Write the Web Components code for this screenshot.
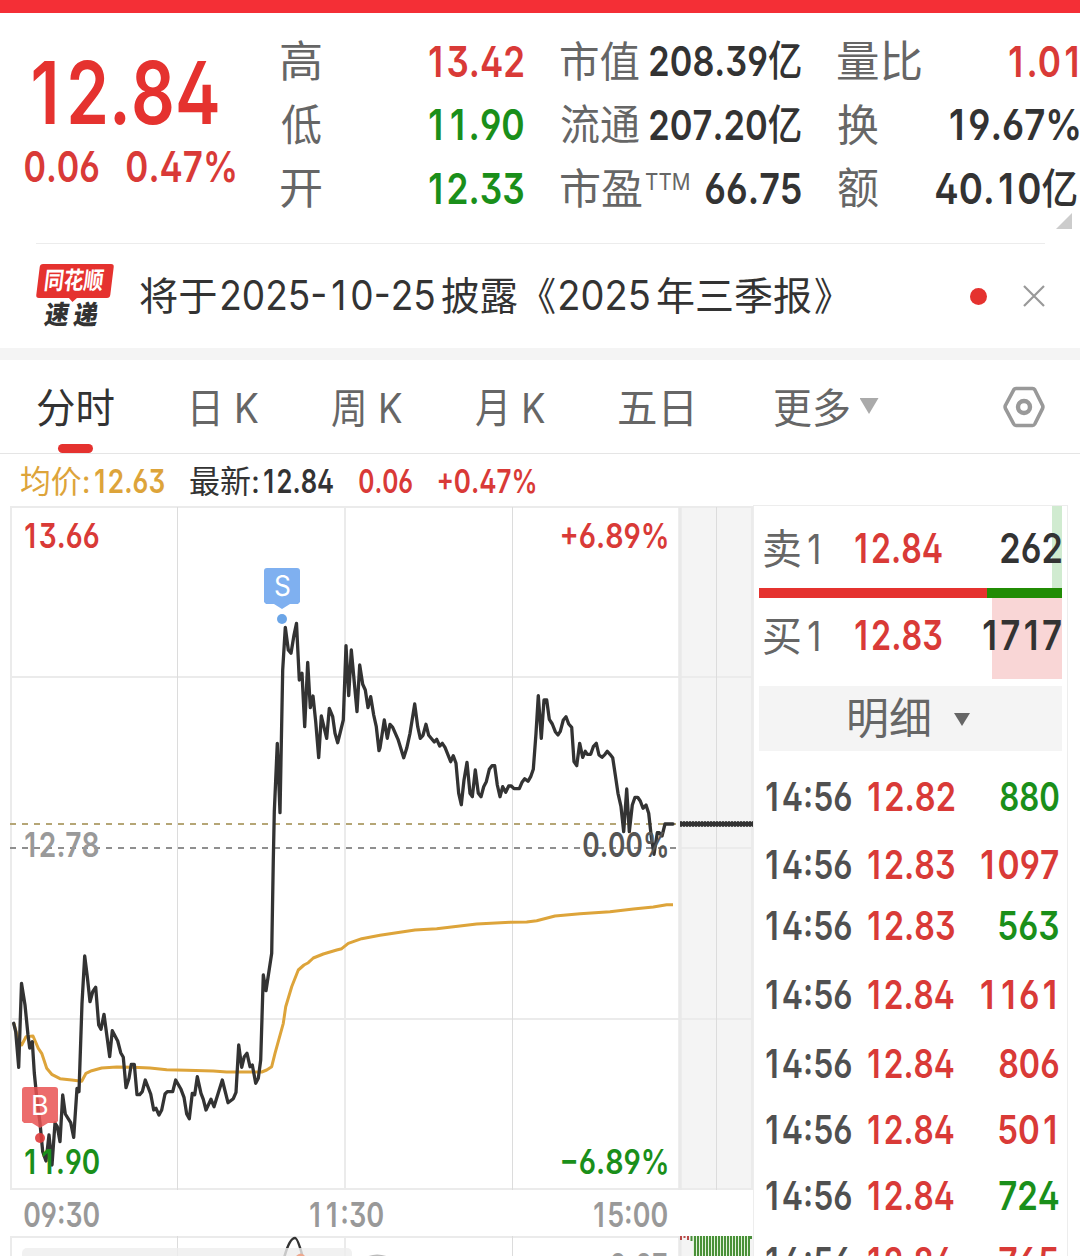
<!DOCTYPE html>
<html lang="zh-CN">
<head>
<meta charset="utf-8">
<title>分时</title>
<style>
  html, body {
    margin: 0;
    background: #fff;
  }
  body {
    width: 1080px;
    height: 1256px;
    overflow: hidden;
    font-family: Inter, "Noto Sans CJK SC", sans-serif;
    color: #333;
  }
</style>
</head>
<body>
<stock-page></stock-page>

<script>
const RED = "#d93a37";
const GREEN = "#1a8f1a";

// Text squeezed or stretched so that its ink is exactly `w` pixels wide.
// The narrow digit 1 gets a cell as wide as the other digits.
class FitText extends HTMLElement {
  constructor() {
    super();
    this.attachShadow({ mode: "open" });
  }

  connectedCallback() {
    const w = Number(this.getAttribute("w"));
    const size = this.getAttribute("size");
    const weight = this.getAttribute("weight") || 400;
    const color = this.getAttribute("color") || "inherit";
    const text = this.textContent;
    const html = text
      .replace(/1/g, "<i>1</i>")
      .replace(/亿/g, "<b>亿</b>");
    this.shadowRoot.innerHTML = `
      <style>
        :host {
          display: block;
          flex: none;
          width: ${w}px;
          height: ${size}px;
          line-height: ${size}px;
          font-size: ${size}px;
          font-weight: ${weight};
          color: ${color};
          white-space: nowrap;
        }
        .ink {
          display: inline-block;
          transform-origin: 0 50%;
          font-kerning: none;
          font-feature-settings: "ss01", "cv03", "cv04";
        }
        i {
          display: inline-block;
          width: 0.62em;
          text-align: center;
          font-style: normal;
        }
        b { font-weight: 500; }
      </style>
      <span class="ink">${html}</span>
    `;
    const ink = this.shadowRoot.querySelector(".ink");
    const ctx = document.createElement("canvas").getContext("2d");
    ctx.font = `${weight} ${size}px ${getComputedStyle(this).fontFamily}`;

    const cell = 0.62 * size;
    const first = ctx.measureText(text[0]);
    const last = ctx.measureText(text[text.length - 1]);
    let left = -first.actualBoundingBoxLeft;
    let right = last.width - last.actualBoundingBoxRight;
    if (text.startsWith("1")) left += (cell - first.width) / 2;
    if (text.endsWith("1")) right += (cell - last.width) / 2;

    const scale = w / (ink.getBoundingClientRect().width - left - right);
    ink.style.transform = `translateX(${-left * scale}px) scaleX(${scale})`;
  }
}
customElements.define("fit-text", FitText);

class QuoteHeader extends HTMLElement {
  constructor() {
    super();
    this.attachShadow({ mode: "open" });
  }

  connectedCallback() {
    this.shadowRoot.innerHTML = `
      <style>
        :host {
          display: block;
          height: 243px;
          position: relative;
        }
        .bar {
          height: 13px;
          background: #f42f36;
        }
        .quote {
          display: grid;
          grid-template-columns: 281px 280px 277px 242px;
          height: 230px;
        }
        .price {
          padding: 37px 0 0 25px;
        }
        .price > fit-text {
          margin-left: 8px;
        }
        .change {
          display: flex;
          gap: 28px;
          margin-top: 9.5px;
        }
        .col {
          display: flex;
          flex-direction: column;
          padding-top: 17px;
        }
        .row {
          display: flex;
          justify-content: space-between;
          align-items: center;
          height: 63.5px;
          color: #666;
        }
        .c2 { padding-right: 38px; }
        .c3 { padding-right: 37px; }
        .c4 { padding-right: 3px; }
        .tight { margin-right: -2px; }
        .pe {
          display: flex;
          gap: 4px;
        }
        .pe fit-text + fit-text { margin-top: 3px; }
        .corner {
          position: absolute;
          right: 8px;
          bottom: 14px;
          width: 16px;
          height: 16px;
          background: #ccc;
          clip-path: polygon(100% 0, 100% 100%, 0 100%);
        }
      </style>
      <div class="bar"></div>
      <div class="quote">
        <div class="price">
          <fit-text w="185" size="86" weight="600" color="#e5322f">12.84</fit-text>
          <div class="change">
            <fit-text w="74" size="42.5" weight="600" color="${RED}">0.06</fit-text>
            <fit-text w="108" size="42.5" weight="600" color="${RED}">0.47%</fit-text>
          </div>
        </div>
        <div class="col c2">
          <div class="row"><fit-text w="40" size="43">高</fit-text><fit-text w="94" size="42.5" weight="600" color="${RED}">13.42</fit-text></div>
          <div class="row"><fit-text w="40" size="43">低</fit-text><fit-text w="94" size="42.5" weight="600" color="${GREEN}">11.90</fit-text></div>
          <div class="row"><fit-text w="40" size="43">开</fit-text><fit-text w="94" size="42.5" weight="600" color="${GREEN}">12.33</fit-text></div>
        </div>
        <div class="col c3">
          <div class="row"><fit-text w="78" size="42">市值</fit-text><fit-text w="151" size="41.5" weight="600" color="#333">208.39亿</fit-text></div>
          <div class="row"><fit-text w="78" size="42">流通</fit-text><fit-text w="151" size="41.5" weight="600" color="#333">207.20亿</fit-text></div>
          <div class="row"><div class="pe"><fit-text w="81" size="42">市盈</fit-text><fit-text w="43" size="23">TTM</fit-text></div><fit-text w="95" size="42.5" weight="600" color="#333">66.75</fit-text></div>
        </div>
        <div class="col c4">
          <div class="row"><fit-text w="83" size="43">量比</fit-text><fit-text w="68" size="42.5" weight="600" color="${RED}">1.01</fit-text></div>
          <div class="row"><fit-text w="40" size="43">换</fit-text><fit-text class="tight" w="129" size="42.5" weight="600" color="#333">19.67%</fit-text></div>
          <div class="row"><fit-text w="40" size="43">额</fit-text><fit-text w="141" size="42.5" weight="600" color="#333">40.10亿</fit-text></div>
        </div>
      </div>
      <div class="corner"></div>
    `;
  }
}
customElements.define("quote-header", QuoteHeader);

class NoticeBar extends HTMLElement {
  constructor() {
    super();
    this.attachShadow({ mode: "open" });
  }

  connectedCallback() {
    this.shadowRoot.innerHTML = `
      <style>
        :host {
          display: block;
          height: 105px;
          border-bottom: 12px solid #f4f4f4;
        }
        .inner {
          display: flex;
          align-items: center;
          height: 104px;
          margin: 0 35px 0 36px;
          border-top: 1px solid #ececec;
        }
        .logo {
          display: flex;
          flex-direction: column;
          align-items: center;
          width: 77px;
          height: 64px;
          margin-right: 26.5px;
        }
        .flag {
          position: relative;
          display: flex;
          align-items: center;
          justify-content: center;
          width: 74px;
          height: 34px;
          border-radius: 3px;
          background: #e5322f;
          transform: skewX(-7deg);
        }
        .flag::after {
          content: "";
          position: absolute;
          left: 32px;
          top: 33px;
          border: 5px solid transparent;
          border-top-color: #e5322f;
          border-bottom: 0;
        }
        .name {
          margin: 4px 3px 0 0;
          transform: skewX(-9deg);
        }
        .text {
          display: flex;
          align-items: center;
          flex: 1;
          margin-top: -2px;
        }
        .dot {
          width: 17px;
          height: 17px;
          border-radius: 50%;
          background: #e5322f;
          margin-right: 36px;
        }
      </style>
      <div class="inner">
        <div class="logo">
          <div class="flag"><fit-text w="61" size="24" weight="700" color="#fff">同花顺</fit-text></div>
          <fit-text class="name" w="57" size="26" weight="900">速 递</fit-text>
        </div>
        <div class="text">
          <fit-text w="75.5" size="39">将于</fit-text>
          <fit-text w="212" size="41" style="margin-left:7px">2025-10-25</fit-text>
          <fit-text w="75" size="39" style="margin-left:8px">披露</fit-text>
          <fit-text w="17" size="39" style="margin-left:21px">《</fit-text>
          <fit-text w="89" size="41" style="margin-left:5px">2025</fit-text>
          <fit-text w="154" size="39" style="margin-left:8px">年三季报</fit-text>
          <fit-text w="17" size="39" style="margin-left:4px">》</fit-text>
        </div>
        <div class="dot"></div>
        <svg width="22" height="22" viewBox="0 0 22 22" fill="none" stroke="#999" stroke-width="2.2">
          <path d="M1 1L21 21M21 1L1 21"/>
        </svg>
      </div>
    `;
  }
}
customElements.define("notice-bar", NoticeBar);

class PeriodTabs extends HTMLElement {
  constructor() {
    super();
    this.attachShadow({ mode: "open" });
  }

  connectedCallback() {
    this.shadowRoot.innerHTML = `
      <style>
        :host {
          display: flex;
          align-items: center;
          box-sizing: border-box;
          height: 94px;
          padding: 0 35px 0 37px;
          border-bottom: 1px solid #e5e5e5;
          color: #666;
        }
        .tab {
          position: relative;
          display: flex;
          align-items: center;
          height: 93px;
        }
        .tab fit-text { margin-top: 3px; }
        .active { color: #333; }
        .active::after {
          content: "";
          position: absolute;
          left: 21px;
          bottom: 0;
          width: 35px;
          height: 9px;
          border-radius: 4.5px;
          background: #e5322f;
        }
        .arrow {
          width: 19px;
          height: 16px;
          margin: 0 0 1px 11px;
          background: #aaa;
          clip-path: polygon(0 0, 100% 0, 50% 100%);
        }
        svg { margin-left: auto; }
      </style>
      <div class="tab active"><fit-text w="77" size="41">分时</fit-text></div>
      <div class="tab" style="margin-left:79px"><fit-text w="65.5" size="41">日 K</fit-text></div>
      <div class="tab" style="margin-left:73.5px"><fit-text w="70" size="41">周 K</fit-text></div>
      <div class="tab" style="margin-left:74px"><fit-text w="69" size="41">月 K</fit-text></div>
      <div class="tab" style="margin-left:73.5px"><fit-text w="73" size="41">五日</fit-text></div>
      <div class="tab" style="margin-left:82px"><fit-text w="75" size="41">更多</fit-text><div class="arrow"></div></div>
      <svg width="42" height="42" viewBox="0 0 42 42" fill="none" stroke="#999">
        <path d="M13 2.5H29.5Q31 2.5 31.8 3.8L39.6 19.4Q40.2 21 39.6 22.4L31.8 38Q31 39.5 29.5 39.5H13Q11.5 39.5 10.7 38L2.4 22.4Q1.8 21 2.4 19.4L10.7 3.8Q11.5 2.5 13 2.5Z" stroke-width="3.6"/>
        <circle cx="21" cy="21" r="6" stroke-width="4.4"/>
      </svg>
    `;
  }
}
customElements.define("period-tabs", PeriodTabs);

const PRICE = `13.7,1023.3 15.7,1031.7 18.7,1067.3 21.5,983.3 25,1005 28,1035 29.7,1048 32.3,1041.7 34.3,1073 36.7,1097
  40,1123 42.7,1151.7 46,1161 49,1135 52,1165 55,1123 57.3,1126.7 60,1141.7 62.7,1095 65.3,1114 70.7,1122.7 73.7,1137.3
  77,1088.3 79,1091.7 82,1003.3 84.7,956 87.3,976.7 90,1001.7 92.7,991.7 95.7,987.3 98.7,1025 101,1029.3 104,1014.3
  109.7,1056.7 112.3,1030.7 117.7,1041 120.7,1052.7 123.3,1057.3 126,1087.7 129,1078.3 131.3,1064.3 134.3,1064.3
  137,1094.7 139.7,1094.7 142.3,1091.7 145.3,1080 150.7,1094 153.7,1110 156,1108.3 159,1115 161.7,1110 165,1094
  167.3,1091.7 172.7,1091.7 175.7,1080 181,1089.3 184,1097.3 186.7,1114 189.3,1118.7 192.3,1093.3 194.7,1094.7
  197.3,1076.7 201,1093.3 203.3,1099.3 206,1110 211,1099.3 214,1106.7 222.3,1080 228,1102.7 233.3,1098.7 236,1092.3
  238.7,1045 241.7,1067.3 244.3,1056.7 247,1053.3 250,1066.7 252.3,1065 255.7,1083.3 258.3,1078.3 260.7,1060 263.3,975
  266,990.7 271.7,953.3 273.3,860 274.3,811.7 277.3,743.3 280,812.7 282.7,670 285.3,627.3 288.3,650 291,653.3 294,635
  296.5,623.3 299.3,680 302,673.3 304.7,726.7 307.7,662.3 310.3,707.7 313,696 315.7,721.7 318.7,757.7 321.3,716
  326.7,738.3 329.3,708.3 332.7,716.7 335,733.3 337.7,742.7 343.3,720 346,645.7 348.7,695.7 351.3,650 357,711.7
  359.7,665 362.7,684.3 365.3,690 368,707.7 370.7,696.7 373.7,715 376.3,726.7 379,750.7 380,748 384.3,720 387.3,738.3
  390,724.3 392.7,727.3 398,739.3 403.7,757.7 406.7,748.3 410,733.3 414.7,704 417.7,726.7 420.3,738.3 423,735.3
  426,724.3 428.7,735.3 434.3,742 436.7,739.3 439.7,746 442.3,743.3 445,747.3 450.7,761.7 453.3,755.7 456,763.3
  458.7,793.3 461.3,804.7 464,780 467,762.3 470,793.3 472.3,796.7 475.3,770 478.3,793.3 481,796.7 483.7,786.7
  486.3,781.7 489.3,769.3 492,765.7 494.7,765.7 497.3,785 500,796.7 502.7,786.7 505.7,792.3 508.7,786 511.3,786
  514,788.7 519.3,788.7 522,782.3 524.7,778.7 528,781.3 530.7,776.7 533.3,769.3 536,733.3 538.3,695.7 541.3,738.3
  544,700 546.7,700 549.3,719.3 552.3,724 555.3,731.7 558,735 560.3,731.3 563.3,720 566,716.7 568.7,724 571.7,727.3
  574,761.7 576.7,765.7 579.7,743.3 582.7,757.3 585.3,751.3 587.3,754.3 590.7,754.3 593.3,746.7 596.3,743.3 599,755
  602,757.3 605,754.3 607.3,751.3 610,754.3 612.7,757.7 615.3,775 618,793.3 621,806.7 623.7,831.7 626.7,789
  629.3,831.7 632.3,805 635,797.3 637.7,797.3 640.3,801 643,808.3 646,805 648.7,813.3 651.3,836.7 654,854.3
  657.3,832.7 659.3,832.7 662,836 665,824 673,824`;

const AVERAGE = `13.7,1023 18.3,1040 21.7,1045 26,1036.7 33,1036 38.3,1048.3 41.7,1053.3 46.7,1068.3 51.7,1074.3 60,1078.7
  71.7,1080 81.7,1081.3 86,1073.3 91.7,1070.7 101.7,1068 116.7,1067 133.3,1067.3 150,1068 166.7,1069.7 186.7,1070.3
  213.3,1071 226.7,1072 261.7,1072 266.7,1070 271.7,1066.7 275,1053.3 283.3,1023.3 285.7,1006.7 291.7,986.7 298.3,970
  304,965 308.3,962.7 313.3,958 323.3,954 336.7,950 341.7,948.7 348.3,943.3 361.7,938.7 380,935.3 400,932.3 415,930
  436.7,928.7 476.7,924 510,922.3 526.7,922 536.7,920.7 555,916 580,913.7 610,911.7 633.3,909 653.3,907 666.7,904.7
  673,904.7`;

class TradeMark extends HTMLElement {
  constructor() {
    super();
    this.attachShadow({ mode: "open" });
  }

  connectedCallback() {
    this.shadowRoot.innerHTML = `
      <style>
        :host {
          position: absolute;
          width: 36px;
          height: 56px;
          --mark: #7fb0f0;
          --dot: #6ba5e7;
        }
        :host([side="buy"]) {
          --mark: rgba(233, 82, 82, 0.85);
          --dot: rgba(222, 60, 60, 0.9);
        }
        .flag {
          display: flex;
          align-items: center;
          justify-content: center;
          height: 41px;
          padding-bottom: 5px;
          box-sizing: border-box;
          background: var(--mark);
          border-radius: 3px 3px 0 0;
          clip-path: polygon(0 0, 100% 0, 100% 34px, 34px 36px, 26px 36px, 50% 100%, 10px 36px, 2px 36px, 0 34px);
        }
        .dot {
          width: 10px;
          height: 10px;
          margin: 5px auto 0;
          border-radius: 50%;
          background: var(--dot);
        }
      </style>
      <div class="flag"><slot></slot></div>
      <div class="dot"></div>
    `;
  }
}
customElements.define("trade-mark", TradeMark);

class IntradayChart extends HTMLElement {
  constructor() {
    super();
    this.attachShadow({ mode: "open" });
  }

  connectedCallback() {
    let bars = "";
    for (let x = 694; x < 749; x += 3) {
      bars += `<rect x="${x}" y="1236" width="2" height="20"/>`;
    }
    this.shadowRoot.innerHTML = `
      <style>
        :host {
          display: block;
          position: relative;
          width: 753px;
          height: 751px;
        }
        svg { display: block; }
        .labels {
          position: absolute;
          inset: 0;
          display: flex;
          flex-direction: column;
          padding: 14px 86px 0 25px;
        }
        .line {
          display: flex;
          justify-content: space-between;
        }
        trade-mark.sell { left: 264px; top: 63px; }
        trade-mark.buy { left: 22px; top: 582px; }
      </style>
      <svg width="753" height="751" viewBox="0 505 753 751" fill="none">
        <rect x="679" y="507" width="74" height="683" fill="#f4f4f4"/>
        <path d="M10 507H753M10 677H753M10 1019H753M10 1189H753M679 848H753M10 1237H680" stroke="#ebebeb" stroke-width="2"/>
        <path d="M11 507V1190M345 507V1190M752 507V1190M11 1236V1256M345 1236V1256" stroke="#ebebeb" stroke-width="2"/>
        <path d="M680 507V1190M680 1236V1256" stroke="#e9e9e9" stroke-width="3.5"/>
        <path d="M177.5 507V1190M512.5 507V1190M716.5 507V1190M177.5 1236V1256M512.5 1236V1256" stroke="#dcdcdc"/>
        <path d="M10 824H676" stroke="#b5a676" stroke-width="1.8" stroke-dasharray="6 6"/>
        <path d="M10 848H676" stroke="#8f8f8f" stroke-width="1.8" stroke-dasharray="6 6"/>
        <polyline points="${AVERAGE}" stroke="#dda43a" stroke-width="3" stroke-linejoin="round"/>
        <polyline points="${PRICE}" stroke="#333" stroke-width="3.3" stroke-linejoin="round" stroke-linecap="round"/>
        <path d="M680 824H753" stroke="#333" stroke-width="4.6"/>
        <path d="M680 824H753" stroke="#333" stroke-width="5.5" stroke-dasharray="2 1"/>

        <path d="M283 1262Q289 1238 295 1238Q298 1238 304 1262" stroke="#333" stroke-width="2.6"/>
        <rect x="22" y="1248" width="330" height="20" rx="5" fill="#ededed" fill-opacity=".8"/>
        <path d="M296 1256Q301 1251 305 1256Z" fill="#eea88d"/>
        <path d="M366 1257Q377 1252 389 1257Z" fill="#bbb"/>
        <rect x="682" y="1236" width="71" height="20" fill="#f4f4f4"/>
        <rect x="693" y="1236" width="57" height="20" fill="#e4f3dd"/>
        <path d="M681 1236V1240M684.5 1236V1238M688 1236V1240" stroke="#b84a48" stroke-width="2"/>
        <path d="M691.5 1236V1241M751 1236V1239" stroke="#4a8f3c" stroke-width="2"/>
        <g fill="#4a9139">${bars}</g>
      </svg>
      <trade-mark class="sell"><fit-text w="15" size="28" color="#fff">S</fit-text></trade-mark>
      <trade-mark class="buy" side="buy"><fit-text w="15" size="27" color="#fff">B</fit-text></trade-mark>
      <div class="labels">
        <div class="line" style="color:${RED}">
          <fit-text w="74" size="34" weight="600">13.66</fit-text>
          <fit-text w="105" size="34" weight="600">+6.89%</fit-text>
        </div>
        <div class="line" style="margin-top:275px">
          <fit-text w="74" size="34" weight="600" color="#999">12.78</fit-text>
          <fit-text w="84" size="34" weight="600" color="#555">0.00%</fit-text>
        </div>
        <div class="line" style="margin-top:283px;color:${GREEN}">
          <fit-text w="74" size="34" weight="600">11.90</fit-text>
          <fit-text w="105" size="34" weight="600">−6.89%</fit-text>
        </div>
        <div class="line" style="margin:19px 0 0 -1px;color:#999">
          <fit-text w="75" size="34" weight="600">09:30</fit-text>
          <fit-text w="73" size="34" weight="600">11:30</fit-text>
          <fit-text w="73" size="34" weight="600">15:00</fit-text>
        </div>
        <div class="line" style="margin-top:17px;height:7px;justify-content:flex-end;color:#999">
          <fit-text w="57" size="34" weight="600">0.07</fit-text>
        </div>
      </div>
    `;
  }
}
customElements.define("intraday-chart", IntradayChart);

// [price, volume, ink width, right inset, colour, gap above]
const TRADES = [
  ["12.82", "880", 58.5, 4, GREEN, 25.5],
  ["12.83", "1097", 77, 4, RED, 29.5],
  ["12.83", "563", 59, 4, GREEN, 21.5],
  ["12.84", "1161", 74, 7, RED, 30],
  ["12.84", "806", 59, 4, RED, 30],
  ["12.84", "501", 56, 7, RED, 27],
  ["12.84", "724", 60, 3, GREEN, 27],
  ["12.84", "765", 59, 4, RED, 27]
];

class OrderPanel extends HTMLElement {
  constructor() {
    super();
    this.attachShadow({ mode: "open" });
  }

  connectedCallback() {
    const rows = TRADES.map(([price, volume, w, inset, color, gap]) => `
      <div class="trade" style="margin-top:${gap}px;padding-right:${inset}px">
        <fit-text w="85" size="39" weight="600" color="#505050">14:56</fit-text>
        <fit-text class="p" w="86" size="39" weight="600" color="${RED}">${price}</fit-text>
        <fit-text w="${w}" size="39" weight="600" color="${color}">${volume}</fit-text>
      </div>`).join("");
    this.shadowRoot.innerHTML = `
      <style>
        :host {
          display: block;
          box-sizing: border-box;
          width: 315px;
          height: 751px;
          padding: 0 5px;
          border: 1px solid #ededed;
          border-bottom: 0;
          overflow: hidden;
        }
        .order {
          display: flex;
          align-items: center;
          height: 81px;
          padding: 0 1px 0 5px;
          color: #666;
        }
        .ask {
          padding-top: 4px;
          height: 78px;
          background: linear-gradient(#d0ebd0, #d0ebd0) right / 10px 100% no-repeat;
        }
        .bid {
          padding-bottom: 5px;
          height: 76px;
          background: linear-gradient(#f9d6d6, #f9d6d6) right / 70px 100% no-repeat;
        }
        .order .n { margin-left: 8px; }
        .order .p { margin-left: 36px; }
        .order .v { margin-left: auto; }
        .ratio {
          display: flex;
          height: 10px;
          background: #218c04;
        }
        .ratio div {
          width: 228px;
          background: #e5322f;
        }
        .detail {
          display: flex;
          align-items: center;
          height: 65px;
          margin-top: 7px;
          padding-left: 90px;
          background: #f4f4f4;
          color: #666;
        }
        .arrow {
          width: 16px;
          height: 13px;
          margin: 2px 0 0 25px;
          background: #666;
          clip-path: polygon(0 0, 100% 0, 50% 100%);
        }
        .trade {
          display: flex;
          align-items: center;
          height: 39px;
          padding-left: 7px;
        }
        .trade .p { margin: 0 auto 0 17px; }
      </style>
      <div class="order ask">
        <fit-text w="36" size="41">卖</fit-text><fit-text class="n" w="11" size="41">1</fit-text>
        <fit-text class="p" w="86.5" size="40.5" weight="600" color="${RED}">12.84</fit-text>
        <fit-text class="v" w="60" size="40.5" weight="600" color="#333">262</fit-text>
      </div>
      <div class="ratio"><div></div></div>
      <div class="order bid">
        <fit-text w="36" size="41">买</fit-text><fit-text class="n" w="11" size="41">1</fit-text>
        <fit-text class="p" w="86.5" size="40.5" weight="600" color="${RED}">12.83</fit-text>
        <fit-text class="v" w="78" size="40.5" weight="600" color="#333">1717</fit-text>
      </div>
      <div class="detail"><fit-text w="80" size="43">明细</fit-text><div class="arrow"></div></div>
      ${rows}
    `;
  }
}
customElements.define("order-panel", OrderPanel);

class StockPage extends HTMLElement {
  constructor() {
    super();
    this.attachShadow({ mode: "open" });
  }

  connectedCallback() {
    this.shadowRoot.innerHTML = `
      <style>
        :host {
          display: flex;
          flex-direction: column;
          height: 1256px;
          overflow: hidden;
        }
        .legend {
          display: flex;
          align-items: center;
          height: 51px;
          padding: 4px 0 0 21px;
          box-sizing: border-box;
        }
        .k + .n { margin-left: 6px; }
        .n + .k, .n + .n { margin-left: 26px; }
        .main { display: flex; }
      </style>
      <quote-header></quote-header>
      <notice-bar></notice-bar>
      <period-tabs></period-tabs>
      <div class="legend">
        <fit-text class="k" w="67.5" size="31.5" color="#dda43a">均价:</fit-text>
        <fit-text class="n" w="69" size="32" weight="600" color="#dda43a">12.63</fit-text>
        <fit-text class="k" w="68" size="31.5">最新:</fit-text>
        <fit-text class="n" w="69" size="32" weight="600">12.84</fit-text>
        <fit-text class="n" w="53" size="32" weight="600" color="${RED}">0.06</fit-text>
        <fit-text class="n" w="97" size="32" weight="600" color="${RED}">+0.47%</fit-text>
      </div>
      <div class="main">
        <intraday-chart></intraday-chart>
        <order-panel></order-panel>
      </div>
    `;
  }
}
customElements.define("stock-page", StockPage);
</script>
</body>
</html>
